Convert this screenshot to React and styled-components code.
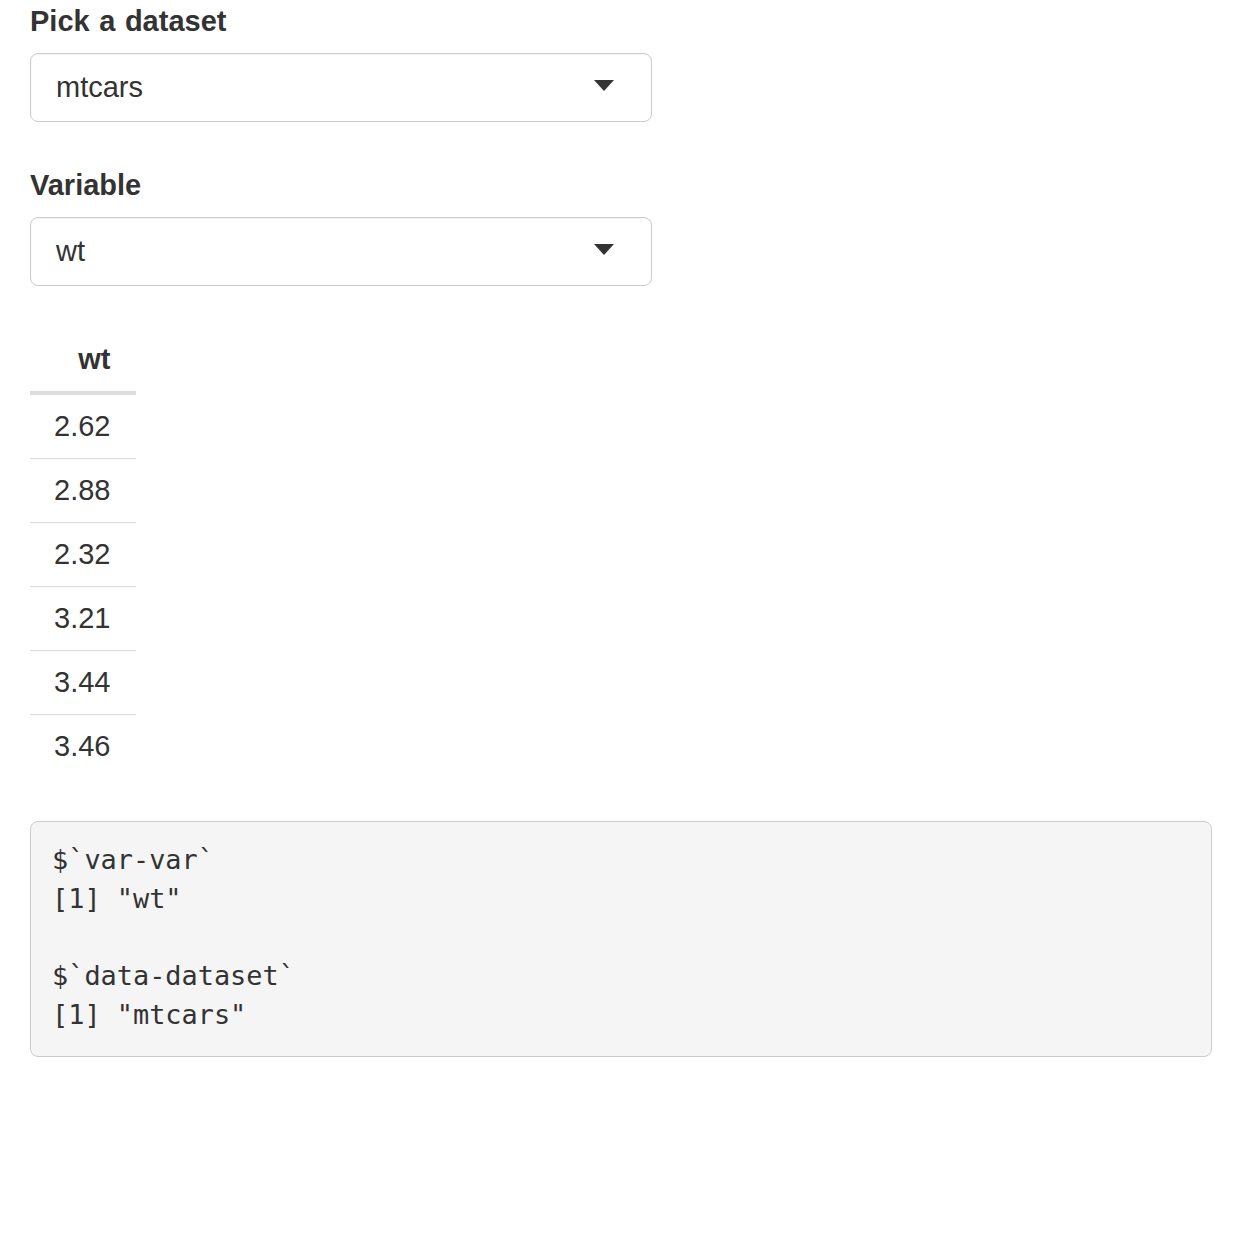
import React from 'react';
import styled, { createGlobalStyle } from 'styled-components';

const GlobalStyle = createGlobalStyle`
    body {
        margin: 0;
        background: #ffffff;
        color: #333333;
        font-family: "Liberation Sans", Arial, sans-serif;
    }
`;

const Page = styled.div`
    display: flex;
    flex-direction: column;
    align-items: flex-start;
    padding: 0 28px 0 30px;
`;

const FormGroup = styled.div`
    width: 622px;
    margin-bottom: ${(p) => p.gap || 42}px;
`;

const Label = styled.label`
    display: block;
    font-size: 29px;
    font-weight: bold;
    line-height: 42px;
    word-spacing: 1.5px;
    margin-bottom: 11px;
`;

const SelectBox = styled.div`
    box-sizing: border-box;
    height: 69px;
    display: flex;
    align-items: center;
    justify-content: space-between;
    padding: 0 37px 0 25px;
    border: 1px solid #cccccc;
    border-radius: 8px;
    box-shadow: inset 0 1px 2px rgba(0, 0, 0, 0.06);
    font-size: 29px;
`;

const Caret = styled.span`
    width: 0;
    height: 0;
    margin-top: -4px;
    border-style: solid;
    border-width: 11px 10px 0 10px;
    border-color: #333333 transparent transparent transparent;
`;

const Table = styled.table`
    border-collapse: collapse;
    margin-top: 0;
    margin-bottom: 43px;
    font-size: 29px;
`;

const Th = styled.th`
    text-align: right;
    font-weight: bold;
    padding: 11px 26px 11px 24px;
    line-height: 42px;
    border-bottom: 4px solid #dddddd;
`;

const Td = styled.td`
    text-align: right;
    padding: 11px 26px 11px 24px;
    line-height: 41px;
    border-top: 1px solid #dddddd;
`;

const Pre = styled.pre`
    box-sizing: border-box;
    align-self: stretch;
    margin: 0;
    padding: 19px 21px 21px;
    background: #f5f5f5;
    border: 1px solid #cccccc;
    border-radius: 8px;
    color: #333333;
    font-family: "DejaVu Sans Mono", "Liberation Mono", monospace;
    font-size: 26.9px;
    line-height: 38.7px;
    white-space: pre;
`;

const datasets = { dataset: 'mtcars', variable: 'wt' };
const values = ['2.62', '2.88', '2.32', '3.21', '3.44', '3.46'];

function Select({ value }) {
    return (
        <SelectBox>
            <span>{value}</span>
            <Caret />
        </SelectBox>
    );
}

export default function App() {
    const output = [
        '$`var-var`',
        `[1] "${datasets.variable}"`,
        '',
        '$`data-dataset`',
        `[1] "${datasets.dataset}"`,
    ].join('\n');

    return (
        <Page>
            <GlobalStyle />
            <FormGroup>
                <Label>Pick a dataset</Label>
                <Select value={datasets.dataset} />
            </FormGroup>
            <FormGroup gap={41}>
                <Label>Variable</Label>
                <Select value={datasets.variable} />
            </FormGroup>
            <Table>
                <thead>
                    <tr>
                        <Th>{datasets.variable}</Th>
                    </tr>
                </thead>
                <tbody>
                    {values.map((v) => (
                        <tr key={v}>
                            <Td>{v}</Td>
                        </tr>
                    ))}
                </tbody>
            </Table>
            <Pre>{output}</Pre>
        </Page>
    );
}
